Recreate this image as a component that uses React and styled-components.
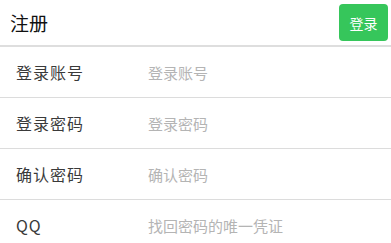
import React from 'react';
import styled, { createGlobalStyle } from 'styled-components';

const GlobalStyle = createGlobalStyle`
  body {
    margin: 0;
    background: #fff;
    font-family: "Noto Sans CJK SC", "Noto Sans", sans-serif;
  }
`;

const Header = styled.header`
  height: 45px;
  display: flex;
  align-items: center;
  justify-content: space-between;
  padding: 0 3px 0 10px;
  border-bottom: 2px solid #dedede;
`;

const Title = styled.h1`
  margin: 0;
  font-size: 19px;
  font-weight: 400;
  color: #111;
`;

const LoginButton = styled.button`
  width: 49px;
  height: 37px;
  border: none;
  border-radius: 4px;
  background: #36c65b;
  color: #fff;
  font-family: inherit;
  font-size: 14px;
  padding: 0;
`;

const Form = styled.form`
  display: flex;
  flex-direction: column;
`;

const Row = styled.label`
  height: 50px;
  display: flex;
  align-items: center;
  border-bottom: 1px solid #dcdcdc;
  padding-left: 16px;
`;

const Label = styled.span`
  width: 132px;
  font-size: 16px;
  color: #3a3a3a;
  letter-spacing: 1px;
`;

const Input = styled.input`
  flex: 1;
  border: none;
  outline: none;
  font-family: inherit;
  font-size: 15px;
  color: #333;
  padding: 0;
  background: transparent;
  &::placeholder {
    color: #b4b4b4;
  }
`;

const fields = [
  { label: '登录账号', placeholder: '登录账号', type: 'text' },
  { label: '登录密码', placeholder: '登录密码', type: 'password' },
  { label: '确认密码', placeholder: '确认密码', type: 'password' },
  { label: 'QQ', placeholder: '找回密码的唯一凭证', type: 'text' },
];

export default function App() {
  return (
    <>
      <GlobalStyle />
      <Header>
        <Title>注册</Title>
        <LoginButton type="button">登录</LoginButton>
      </Header>
      <Form>
        {fields.map((f) => (
          <Row key={f.label}>
            <Label>{f.label}</Label>
            <Input type={f.type} placeholder={f.placeholder} />
          </Row>
        ))}
      </Form>
    </>
  );
}
